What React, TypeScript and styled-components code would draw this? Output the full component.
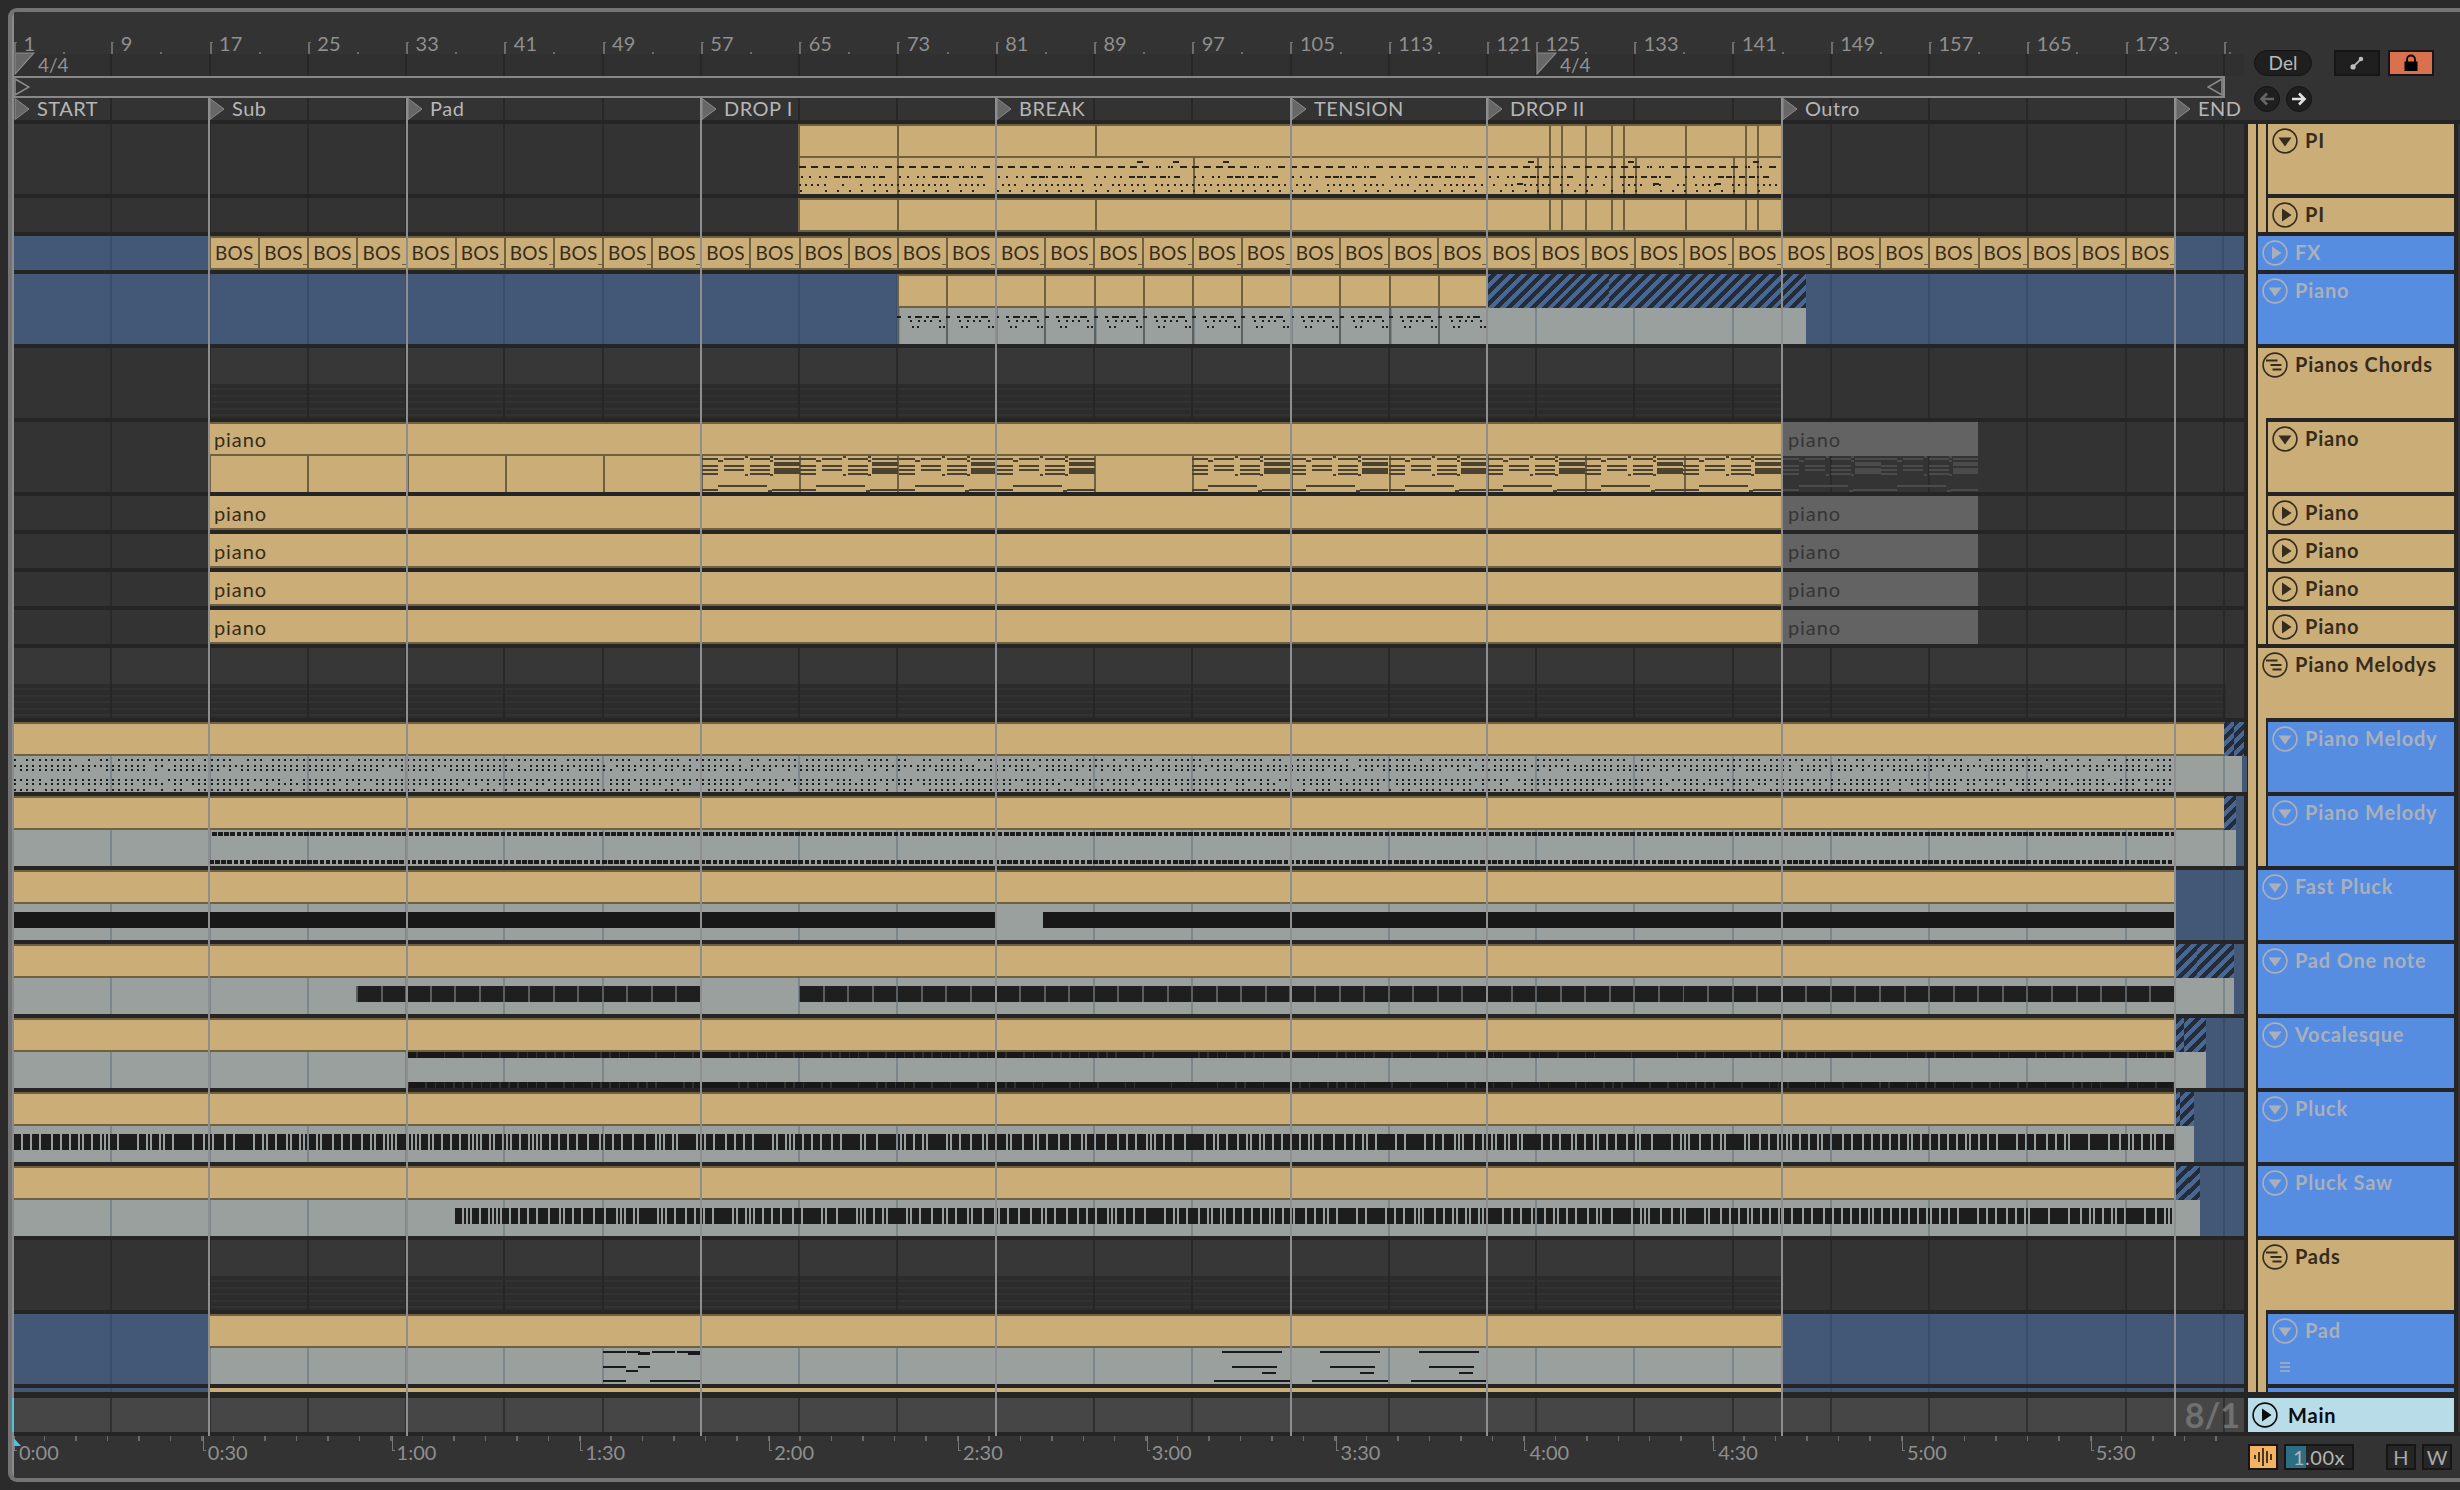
import React from 'react';
import styled, { createGlobalStyle, css } from 'styled-components';

const ORIGIN = 14; // x of the first lane pixel
const END_X = 2244; // right edge of the lanes
const STEP8 = 98.27; // width of 8 bars
const STEP4 = STEP8 / 2;

const TAN = '#cbad78';
const TAN_LINE = '#6f6040';
const BLUE = '#578de0';
const FONT = `'Lato', 'Noto Sans', sans-serif`;

// the grid jumps half a step at bar 125, where the second time signature sits
const gridXs: number[] = [];
for (let x = 13 + STEP8; x < 1500; x += STEP8) gridXs.push(x);
for (let x = 1536; x < END_X; x += STEP8) gridXs.push(x);

const gridImage = (color: string) => {
  const stops = gridXs.flatMap((x) => {
    const a = (x - ORIGIN - 1).toFixed(2);
    const b = (x - ORIGIN + 1).toFixed(2);
    return [`transparent ${a}px`, `${color} ${a}px`, `${color} ${b}px`, `transparent ${b}px`];
  });
  return `linear-gradient(90deg, transparent 0, ${stops.join(', ')})`;
};

const withGrid = (bg: string, line: string) => css`
  background-color: ${bg};
  background-image: ${gridImage(line)};
  background-size: 2300px 100%;
  background-repeat: no-repeat;
`;

const GlobalStyle = createGlobalStyle`
  html, body {
    margin: 0;
    width: 2460px;
    height: 1490px;
    overflow: hidden;
    background: #2b2b2b;
    font-family: ${FONT};
  }
`;

const Frame = styled.div`
  box-sizing: border-box;
  display: flex;
  gap: 4px;
  width: 2452px;
  height: 1474px;
  margin: 8px 0 0 8px;
  border: 4px solid #747474;
  border-right: none;
  border-radius: 9px 0 0 9px;
  background: #252525;
  overflow: hidden;
`;

/* ---------- arrangement column ---------- */

const Arrangement = styled.div`
  position: relative;
  box-sizing: border-box;
  display: flex;
  flex-direction: column;
  flex: 0 0 2232px;
  width: 2232px;
  min-width: 0;
  border-left: 2px solid #8b8b8b;
`;

const TimelineHead = styled.div`
  display: flex;
  flex-direction: column;
  flex: 0 0 108px;
  background: #333;
`;

const BarRuler = styled.div`
  display: flex;
  height: 42px;
`;

const BarCell = styled.div`
  position: relative;
  box-sizing: border-box;
  flex: none;
  padding: 21px 0 0 9.5px;
  font-size: 20px;
  line-height: 20px;
  color: #8f8f8f;
  &::before {
    content: '';
    position: absolute;
    left: 0;
    bottom: 0;
    width: 3px;
    height: 12px;
    box-sizing: border-box;
    border-left: 2px solid #6d6d6d;
    border-top: 1px solid #6d6d6d;
  }
  &::after {
    content: '';
    position: absolute;
    left: 50%;
    bottom: 0;
    width: 2px;
    height: 2px;
    background: #6d6d6d;
  }
`;

const SignatureLane = styled.div`
  display: flex;
  height: 22px;
  ${withGrid('#303030', '#272727')}
`;

const SignatureCell = styled.div`
  flex: none;
  display: flex;
  align-items: flex-start;
  gap: 3px;
  font-size: 19px;
  line-height: 22px;
  color: #929292;
  svg {
    margin-top: -2px;
  }
`;

const LoopLane = styled.div`
  box-sizing: border-box;
  display: flex;
  justify-content: space-between;
  align-items: center;
  width: 2211px;
  height: 22px;
  border: 2px solid #888;
  border-left: none;
`;

const LocatorLane = styled.div`
  display: flex;
  height: 22px;
  ${withGrid('#333', '#272727')}
`;

const LocatorCell = styled.div`
  flex: none;
  display: flex;
  align-items: center;
  gap: 7px;
  font-size: 20px;
  line-height: 20px;
  letter-spacing: 0.5px;
  white-space: nowrap;
  color: #b6b6b6;
`;

const LocatorName = styled.span`
  margin-top: -2px;
`;

const Lanes = styled.div`
  display: flex;
  flex-direction: column;
  gap: 4px;
  padding-top: 4px;
`;

const Lane = styled.div`
  display: flex;
  flex-direction: column;
`;

const StripBox = styled.div<{ $h: number }>`
  position: relative;
  display: flex;
  height: ${(p) => p.$h}px;
`;

const NoteLayer = styled.svg`
  position: absolute;
  left: 0;
  top: 0;
`;

type Kind =
  | 'empty'
  | 'blue'
  | 'gray'
  | 'head'
  | 'foot'
  | 'tanBody'
  | 'dim'
  | 'dimBody'
  | 'hatch'
  | 'groupTop'
  | 'groupStripes';

const kindStyles: Record<Kind, ReturnType<typeof css>> = {
  empty: withGrid('#333', '#292929'),
  blue: withGrid('#425876', '#3a4e6c'),
  gray: withGrid('#9aa09e', '#7c878c'),
  head: css`
    background: ${TAN};
    box-shadow: inset 0 2px ${TAN_LINE}, inset 0 -2px ${TAN_LINE};
  `,
  foot: css`
    background: ${TAN};
    box-shadow: inset 0 -2px ${TAN_LINE};
  `,
  tanBody: css`
    background: ${TAN};
  `,
  dim: css`
    background: #636363;
  `,
  dimBody: withGrid('#343434', '#2a2a2a'),
  hatch: css`
    background-image: repeating-linear-gradient(135deg, #222c3c 0 4.2px, #4a688f 4.2px 8.4px);
  `,
  groupTop: withGrid('#373737', '#292929'),
  groupStripes: css`
    background-image: ${gridImage('#262626')},
      repeating-linear-gradient(180deg, #2c2c2c 0 4.5px, #323232 4.5px 6.5px);
    background-size: 2300px 100%;
    background-repeat: no-repeat;
  `,
};

const Seg = styled.div<{ $kind: Kind; $divider?: boolean; $notch?: boolean }>`
  position: relative;
  box-sizing: border-box;
  flex: none;
  overflow: hidden;
  padding-left: 5px;
  font-size: 19px;
  line-height: 34px;
  letter-spacing: ${(p) => (p.$notch ? 0.3 : 0.9)}px;
  white-space: nowrap;
  color: #352c1c;
  ${(p) => kindStyles[p.$kind]}
  ${(p) => p.$kind === 'dim' && 'color: #353535;'}
  ${(p) => !p.$notch && 'font-size: 20px;'}
  ${(p) =>
    p.$divider &&
    css`
      border-left: 2px solid ${p.$kind === 'gray' ? '#5c6162' : TAN_LINE};
      padding-left: 4px;
    `}
  ${(p) =>
    p.$notch &&
    css`
      &::after {
        content: '';
        position: absolute;
        right: 0;
        bottom: 5px;
        width: 4px;
        height: 1.5px;
        background: ${TAN_LINE};
      }
    `}
`;

const SectionLine = styled.div`
  position: absolute;
  top: 86px;
  bottom: 42px;
  width: 2px;
  background: #8e8e8e;
  z-index: 2;
`;

const MainLane = styled.div`
  position: relative;
  flex: 0 0 34px;
  margin-top: 6px;
  ${withGrid('#464646', '#303030')}
`;

const Zoom = styled.div`
  position: absolute;
  right: 4px;
  top: 0;
  font-size: 34px;
  line-height: 34px;
  font-weight: 700;
  color: #707070;
`;

const PlayMark = styled.div`
  position: absolute;
  left: -2px;
  top: 0;
  bottom: 0;
  width: 2px;
  background: #4fc3dc;
`;

const TimeRuler = styled.div`
  position: relative;
  display: flex;
  flex: 0 0 42px;
  margin-top: 4px;
  overflow: hidden;
  background-color: #333;
  background-image: repeating-linear-gradient(90deg, transparent 0 30px, #6a6a6a 30px 31.47px);
  background-size: 100% 5px;
  background-repeat: no-repeat;
`;

const TimeCell = styled.div`
  position: relative;
  box-sizing: border-box;
  flex: 0 0 188.8px;
  padding: 6px 0 0 5px;
  font-size: 20px;
  line-height: 20px;
  color: #8f8f8f;
  &::before {
    content: '';
    position: absolute;
    left: 0;
    top: 0;
    width: 3px;
    height: 15px;
    box-sizing: border-box;
    border-left: 1.5px solid #777;
    border-bottom: 1px solid #777;
  }
`;

const PlayCorner = styled.svg`
  position: absolute;
  left: -1px;
  top: 1px;
`;

/* ---------- track headers ---------- */

const Sidebar = styled.div`
  display: flex;
  flex-direction: column;
  flex: 0 0 212px;
  min-width: 0;
`;

const Controls = styled.div`
  box-sizing: border-box;
  flex: 0 0 108px;
  display: flex;
  flex-direction: column;
  gap: 10px;
  margin-left: -4px;
  padding: 38px 0 0 10px;
  background: #333;
`;

const ControlRow = styled.div`
  display: flex;
`;

const Pill = styled.div`
  box-sizing: border-box;
  width: 58px;
  height: 26px;
  margin-right: 22px;
  border: 1.5px solid #141414;
  border-radius: 13px;
  background: #1f1f1f;
  font-size: 19px;
  line-height: 23px;
  text-align: center;
  color: #b9b9b9;
`;

const SquareButton = styled.div<{ $bg: string; $w?: number }>`
  box-sizing: border-box;
  display: flex;
  align-items: center;
  justify-content: center;
  width: ${(p) => p.$w ?? 46}px;
  height: 26px;
  margin-right: 8px;
  border: 2px solid #161616;
  background: ${(p) => p.$bg};
  font-size: 20px;
  color: #a9a9a9;
`;

const ArrowButton = styled.div`
  box-sizing: border-box;
  display: flex;
  align-items: center;
  justify-content: center;
  width: 26px;
  height: 26px;
  margin-right: 6px;
  border: 1.5px solid #141414;
  border-radius: 50%;
  background: #1f1f1f;
`;

const SideBody = styled.div`
  display: flex;
  margin-top: 4px;
`;

const SideColumn = styled.div`
  display: flex;
  flex-direction: column;
  flex: 0 0 206px;
  min-width: 0;
`;

const Rail = styled.div`
  flex: 0 0 2px;
  margin-left: 4px;
  background: #333;
`;

const Tree = styled.div`
  display: flex;
  gap: 2px;
`;

const TanStrip = styled.div`
  flex: 0 0 8px;
  background: ${TAN};
`;

const TreeList = styled.div<{ $padTop?: boolean }>`
  display: flex;
  flex-direction: column;
  flex: 1;
  min-width: 0;
  gap: 4px;
  padding-top: ${(p) => (p.$padTop ? 4 : 0)}px;
`;

const TrackHead = styled.div<{ $h: number; $blue?: boolean }>`
  position: relative;
  box-sizing: border-box;
  display: flex;
  align-items: flex-start;
  gap: 7px;
  height: ${(p) => p.$h}px;
  padding: 4px 0 0 4px;
  overflow: hidden;
  background: ${(p) => (p.$blue ? BLUE : TAN)};
  color: ${(p) => (p.$blue ? '#aab0bb' : '#352c1c')};
  font-size: 20px;
  font-weight: 700;
  line-height: 25px;
  letter-spacing: 0.8px;
  white-space: nowrap;
`;

const MainTrack = styled.div`
  box-sizing: border-box;
  display: flex;
  align-items: center;
  gap: 10px;
  height: 34px;
  margin-top: 6px;
  padding-left: 4px;
  background: #b8dce8;
  color: #0c0c0c;
  font-size: 20px;
  font-weight: 700;
  letter-spacing: 0.8px;
`;

const ListIcon = styled.svg`
  position: absolute;
  left: 12px;
  top: 48px;
`;

const BottomBar = styled.div`
  box-sizing: border-box;
  flex: 0 0 42px;
  display: flex;
  margin: 4px 0 0 -4px;
  padding: 8px 0 0 4px;
  background: #333;
`;

const WaveButton = styled.div`
  box-sizing: border-box;
  display: flex;
  align-items: center;
  justify-content: center;
  width: 30px;
  height: 26px;
  margin-right: 6px;
  border: 2px solid #161616;
  background: #f5b261;
`;

const TempoField = styled.div`
  position: relative;
  box-sizing: border-box;
  width: 70px;
  height: 26px;
  margin-right: 32px;
  border: 2px solid #161616;
  background: #262626;
  font-size: 20px;
  line-height: 22px;
  letter-spacing: 0.5px;
  padding-left: 7px;
  color: #b4b4b4;
`;

const TempoFill = styled.div`
  position: absolute;
  left: 0;
  top: 0;
  bottom: 0;
  width: 20px;
  background: #2d6e84;
`;

const TempoText = styled.span`
  position: relative;
`;

const FlagButton = styled(SquareButton)`
  margin-right: 6px;
  font-weight: 400;
`;

/* ---------- icons ---------- */

const CircleIcon: React.FC<{ kind: 'down' | 'right' | 'group'; color: string }> = ({ kind, color }) => (
  <svg width={26} height={26} viewBox="0 0 26 26" style={{ flex: 'none' }}>
    <circle cx={13} cy={13} r={11.9} fill="none" stroke={color} strokeWidth={1.6} />
    {kind === 'down' && <polygon points="6.5,9.5 19.5,9.5 13,18.5" fill={color} />}
    {kind === 'right' && <polygon points="10,6.5 19.5,13 10,19.5" fill={color} />}
    {kind === 'group' && (
      <path d="M4 8.5h11.5M8.5 13h11M10.5 17.5h9" stroke={color} strokeWidth={1.8} fill="none" />
    )}
  </svg>
);

const LocatorFlag = () => (
  <svg width={16} height={22} viewBox="0 0 16 22" style={{ flex: 'none' }}>
    <polygon points="1,0.5 15,11 1,21.5" fill="#676767" stroke="#8c8c8c" strokeWidth={1} />
  </svg>
);

const SignatureFlag = () => (
  <svg width={21} height={23} viewBox="0 0 21 23" style={{ flex: 'none' }}>
    <polygon points="1,1 20,1 1,22" fill="#686868" stroke="#8a8a8a" strokeWidth={1.2} />
  </svg>
);

const LoopFlag: React.FC<{ flip?: boolean }> = ({ flip }) => (
  <svg width={16} height={18} viewBox="0 0 16 18" style={{ flex: 'none' }}>
    <polygon
      points={flip ? '15,1 1,9 15,17' : '1,1 15,9 1,17'}
      fill="none"
      stroke="#8a8a8a"
      strokeWidth={1.6}
    />
  </svg>
);

/* ---------- note drawings ---------- */

const noise = (i: number) => {
  const s = Math.sin(i * 12.9898) * 43758.5453;
  return s - Math.floor(s);
};

const rect = (x: number, y: number, w: number, h: number) =>
  `M${(x - ORIGIN).toFixed(1)} ${y}h${w.toFixed(1)}v${h}h${(-w).toFixed(1)}z`;

type TileRect = [number, number, number, number];

const tile = (from: number, to: number, period: number, rects: TileRect[]) => {
  let d = '';
  for (let k = 0; from + k * period < to; k++) {
    for (const [rx, ry, rw, rh] of rects) {
      const x = from + k * period + rx;
      if (x < to) d += rect(x, ry, Math.min(rw, to - x), rh);
    }
  }
  return d;
};

const dots = (from: number, to: number, y: number, step: number, w: number, h: number, seed: number, keep = 0.85) => {
  let d = '';
  let i = 0;
  for (let x = from; x < to; x += step, i++) {
    if (noise(i + seed) < keep) d += rect(x, y, Math.min(w, to - x), h);
  }
  return d;
};

const barcode = (from: number, to: number, y: number, h: number, seed: number) => {
  let d = '';
  let x = from;
  let i = 0;
  while (x < to) {
    const n = noise(i + seed);
    const w = n < 0.3 ? 2 : n < 0.75 ? 7 : n < 0.93 ? 9.5 : 18;
    d += rect(x, y, Math.min(w, to - x), h);
    x += w + 2;
    i++;
  }
  return d;
};

const leadCycle = (from: number, to: number) => {
  const rects: TileRect[] = [
    [0, 8, 7, 2], [12, 8, 7, 2], [24, 8, 7, 2], [36, 8, 7, 2], [48, 8, 7, 2],
    [62, 8, 2, 2], [65, 8, 2, 2], [74, 8, 2, 2], [77, 8, 2, 2], [86, 8, 7, 2],
    [2, 18, 2, 2], [10, 18, 2, 2], [20, 18, 2, 2], [26, 18, 2, 2], [35, 18, 6, 2], [43, 18, 6, 2],
    [50, 18, 2, 2], [56, 18, 6, 2], [66, 18, 6, 2], [74, 18, 2, 2], [80, 18, 6, 2],
  ];
  return tile(from, to, STEP8, rects);
};

const lead =
  leadCycle(799, 1783) +
  dots(799, 1783, 26, 6.14, 2, 2, 5, 0.8) +
  dots(800, 1783, 32, 12.28, 2, 2, 40, 0.85) +
  [1137, 1173, 1223, 1528, 1628, 1753].map((x) => rect(x, 3, 6, 2)).join('') +
  [1517, 1653, 1715].map((x) => rect(x, 25, 6, 2)).join('');

const chordCycle: TileRect[] = [
  [0, 2, 16, 2], [22, 2, 20, 2], [48, 2, 20, 2], [72, 2, 26, 2],
  [16, 4, 5, 2], [43, 0, 3, 2], [68, 0, 3, 2], [68, 4, 3, 2],
  [72, 6, 26, 4],
  [0, 9, 16, 2], [22, 9, 20, 2], [48, 9, 20, 2],
  [72, 12, 26, 6],
  [0, 13, 16, 2], [22, 13, 20, 2], [48, 13, 20, 2],
  [0, 17, 16, 2], [43, 18, 3, 2], [48, 17, 20, 2], [68, 18, 3, 2],
  [16, 29, 49, 2],
  [0, 33, 16, 2], [70, 33, 28, 2], [66, 34, 4, 2],
];

const padCycle: TileRect[] = [
  [0, 3, 23, 2], [24, 3, 13, 2], [49, 3, 23, 2], [74, 3, 24, 2],
  [35, 4, 12, 3], [85, 4, 12, 3],
  [0, 18, 23, 2], [35, 18, 12, 2], [23, 22, 12, 2],
  [0, 32, 23, 2], [47, 32, 50, 2],
];

const padLate: TileRect[] = [
  [30, 3, 60, 2],
  [40, 18, 45, 2], [70, 24, 14, 2],
  [22, 32, 76, 2],
];

const pad1Notes = tile(603, 701, STEP8, padCycle) + tile(1192, 1487, STEP8, padLate);

const NOTE = '#1b1d1d';

/* ---------- lanes ---------- */

interface SegSpec {
  to: number;
  kind: Kind;
  label?: string;
  divider?: boolean;
  notch?: boolean;
}

interface NoteSpec {
  d: string;
  color: string;
}

interface StripSpec {
  h: number;
  segs: SegSpec[];
  notes?: NoteSpec[];
}

// turns a list of boundaries into clips that each open with a divider line
const clipRun = (bounds: number[], kind: Kind): SegSpec[] =>
  bounds.slice(1).map((to) => ({ to, kind, divider: true }));

const gap = (to: number): SegSpec => ({ to, kind: 'empty' });
const blueTo = (to: number): SegSpec => ({ to, kind: 'blue' });

const leadHead = [798, 897, 1095, 1549, 1561, 1585, 1611, 1623, 1685, 1745, 1757, 1783];
const leadBody = [798, 897, 1193, 1537, 1549, 1561, 1585, 1611, 1623, 1635, 1685, 1733, 1745, 1757, 1783];

const bosBounds = Array.from({ length: 41 }, (_, i) => 209 + i * STEP4);
const pianoBounds = Array.from({ length: 13 }, (_, i) => 897 + i * 49.17);
const chordBounds = [209, 307, 407, 505, 603, 701, 799, 897, 995, 1094, 1192, 1291, 1389, 1487, 1585, 1684, 1783];

const groupLane = (from: number, to: number): StripSpec[] => [
  { h: 36, segs: [...(from > ORIGIN ? [gap(from)] : []), { to, kind: 'groupTop' }, gap(END_X)] },
  { h: 34, segs: [...(from > ORIGIN ? [gap(from)] : []), { to, kind: 'groupStripes' }, gap(END_X)] },
];

const pianoRow = (): StripSpec[] => [
  {
    h: 34,
    segs: [gap(209), { to: 1783, kind: 'foot', label: 'piano' }, { to: 1978, kind: 'dim', label: 'piano' }, gap(END_X)],
  },
];

const melodyLane = (tanEnd: number, hatchEnd: number, grayEnd: number, notes: NoteSpec[]): StripSpec[] => [
  {
    h: 34,
    segs: [
      { to: tanEnd, kind: 'head' },
      ...(hatchEnd > tanEnd ? [{ to: hatchEnd, kind: 'hatch' as Kind }] : []),
      ...(hatchEnd < END_X ? [blueTo(END_X)] : []),
    ],
  },
  { h: 36, segs: [{ to: grayEnd, kind: 'gray' }, blueTo(END_X)], notes },
];

const denseRows = [2.5, 8.5, 12.5, 22.5, 26.5, 32.5]
  .map((y, i) => dots(ORIGIN, 2175, y, 6.14, 2, 2, i * 97, i === 1 || i === 3 ? 0.95 : 0.82))
  .join('');

const stepped =
  dots(212, 2175, 2, 6.14, 4.5, 4, 300, 1) + dots(209, 2175, 30, 6.14, 4.5, 4, 300, 1);

const blocks = (from: number, to: number) => tile(from, to, STEP8 / 4, [[0, 8, 22.6, 16]]);

const vocal = [0, 30]
  .map((y) => rect(407, y, 2175 - 407, 6))
  .join('');

const LANES: StripSpec[][] = [
  [
    { h: 34, segs: [gap(798), ...clipRun(leadHead, 'head'), gap(END_X)] },
    {
      h: 36,
      segs: [gap(798), ...clipRun(leadBody, 'tanBody'), gap(END_X)],
      notes: [{ d: lead, color: '#2a2418' }],
    },
  ],
  [{ h: 34, segs: [gap(798), ...clipRun(leadHead, 'head'), gap(END_X)] }],
  [
    {
      h: 34,
      segs: [
        blueTo(209),
        ...bosBounds.slice(1).map((to): SegSpec => ({ to, kind: 'head', divider: true, notch: true, label: 'BOS' })),
        blueTo(END_X),
      ],
    },
  ],
  [
    { h: 34, segs: [blueTo(897), ...clipRun(pianoBounds, 'head'), { to: 1806, kind: 'hatch' }, blueTo(END_X)] },
    {
      h: 36,
      segs: [blueTo(897), ...clipRun(pianoBounds, 'gray'), { to: 1806, kind: 'gray' }, blueTo(END_X)],
      notes: [
        {
          d: tile(897, 1487, 49.17, [
            [0, 8, 4, 2], [11, 8, 3, 2], [18, 8, 7, 2], [29, 8, 3, 2], [35, 8, 7, 2],
            [13, 12, 2, 2], [21, 12, 2, 2], [27, 12, 2, 2], [33, 12, 2, 2], [42, 12, 2, 2],
            [15, 18, 2, 2], [20, 18, 2, 2], [42, 18, 2, 2], [46, 18, 2, 2],
          ]),
          color: NOTE,
        },
      ],
    },
  ],
  groupLane(209, 1783),
  [
    {
      h: 34,
      segs: [gap(209), { to: 1783, kind: 'head', label: 'piano' }, { to: 1978, kind: 'dim', label: 'piano' }, gap(END_X)],
    },
    {
      h: 36,
      segs: [gap(209), ...clipRun(chordBounds, 'tanBody'), { to: 1978, kind: 'dimBody' }, gap(END_X)],
      notes: [
        { d: tile(702, 1095, STEP8, chordCycle) + tile(1192, 1783, STEP8, chordCycle), color: '#4c4230' },
        { d: tile(1783, 1978, STEP8, chordCycle), color: '#4b4b4b' },
      ],
    },
  ],
  pianoRow(),
  pianoRow(),
  pianoRow(),
  pianoRow(),
  groupLane(ORIGIN, 2226),
  melodyLane(2224, END_X, 2242, [{ d: denseRows, color: NOTE }]),
  melodyLane(2224, 2236, 2236, [{ d: stepped, color: NOTE }]),
  melodyLane(2175, 2175, 2175, [
    { d: rect(ORIGIN, 8, 995 - ORIGIN, 16) + rect(1043, 8, 2175 - 1043, 16), color: '#181818' },
  ]),
  melodyLane(2175, 2234, 2234, [
    { d: rect(356, 8, 701 - 356, 16) + rect(799, 8, 2175 - 799, 16), color: '#5a5e5e' },
    { d: blocks(358, 701) + blocks(800, 2175), color: '#1f1f1f' },
  ]),
  melodyLane(2175, 2206, 2206, [
    { d: vocal, color: '#181818' },
    { d: dots(407, 2175, 0, 9.2, 1.5, 6, 11, 0.6) + dots(407, 2175, 30, 9.2, 1.5, 6, 61, 0.6), color: '#303030' },
  ]),
  melodyLane(2175, 2194, 2194, [{ d: barcode(ORIGIN, 2175, 8, 16, 17), color: '#1d1d1d' }]),
  melodyLane(2175, 2200, 2200, [{ d: barcode(455, 2175, 8, 16, 77), color: '#1d1d1d' }]),
  groupLane(209, 1783),
  [
    { h: 34, segs: [blueTo(209), { to: 1783, kind: 'head' }, blueTo(END_X)] },
    {
      h: 36,
      segs: [blueTo(209), { to: 1783, kind: 'gray' }, blueTo(END_X)],
      notes: [{ d: pad1Notes, color: '#1a1a1a' }],
    },
  ],
  [{ h: 4, segs: [blueTo(209), { to: 1783, kind: 'tanBody' }, blueTo(END_X)] }],
];

const LaneStrip: React.FC<{ strip: StripSpec }> = ({ strip }) => {
  let from = ORIGIN;
  return (
    <StripBox $h={strip.h}>
      {strip.segs.map((seg, i) => {
        const x = from;
        from = seg.to;
        return (
          <Seg
            key={i}
            $kind={seg.kind}
            $divider={seg.divider}
            $notch={seg.notch}
            style={{ width: seg.to - x, backgroundPositionX: ORIGIN - x }}
          >
            {seg.label}
          </Seg>
        );
      })}
      {strip.notes && (
        <NoteLayer width={END_X - ORIGIN} height={strip.h} shapeRendering="crispEdges">
          {strip.notes.map((n, i) => (
            <path key={i} d={n.d} fill={n.color} />
          ))}
        </NoteLayer>
      )}
    </StripBox>
  );
};

/* ---------- timeline data ---------- */

const barMarks: { label?: number; x: number }[] = [];
for (let i = 0; i <= 15; i++) barMarks.push({ label: 1 + i * 8, x: i === 0 ? ORIGIN : 13 + i * STEP8 });
for (let i = 0; i <= 6; i++) barMarks.push({ label: 125 + i * 8, x: 1536 + i * STEP8 });
barMarks.push({ x: 1536 + 7 * STEP8 });

const locators = [
  { name: 'START', x: ORIGIN },
  { name: 'Sub', x: 209 },
  { name: 'Pad', x: 407 },
  { name: 'DROP I', x: 701 },
  { name: 'BREAK', x: 996 },
  { name: 'TENSION', x: 1291 },
  { name: 'DROP II', x: 1487 },
  { name: 'Outro', x: 1782 },
  { name: 'END', x: 2175 },
];

const times = ['0:00', '0:30', '1:00', '1:30', '2:00', '2:30', '3:00', '3:30', '4:00', '4:30', '5:00', '5:30'];

const DARK_TEXT = '#352c1c';
const DIM_TEXT = '#aab0bb';

const Head: React.FC<{ name: string; h: number; blue?: boolean; icon: 'down' | 'right' | 'group' }> = ({
  name,
  h,
  blue,
  icon,
}) => (
  <TrackHead $h={h} $blue={blue}>
    <CircleIcon kind={icon} color={blue ? DIM_TEXT : DARK_TEXT} />
    {name}
  </TrackHead>
);

const App: React.FC = () => (
  <>
    <GlobalStyle />
    <Frame>
      <Arrangement>
        <TimelineHead>
          <BarRuler>
            {barMarks.map((m, i) => (
              <BarCell key={i} style={{ width: (barMarks[i + 1]?.x ?? m.x + 2) - m.x }}>
                {m.label}
              </BarCell>
            ))}
          </BarRuler>
          <SignatureLane>
            <SignatureCell style={{ width: 1536 - ORIGIN }}>
              <SignatureFlag />
              4/4
            </SignatureCell>
            <SignatureCell>
              <SignatureFlag />
              4/4
            </SignatureCell>
          </SignatureLane>
          <LoopLane>
            <LoopFlag />
            <LoopFlag flip />
          </LoopLane>
          <LocatorLane>
            {locators.map((l, i) => (
              <LocatorCell key={l.name} style={{ width: (locators[i + 1]?.x ?? END_X) - l.x }}>
                <LocatorFlag />
                <LocatorName>{l.name}</LocatorName>
              </LocatorCell>
            ))}
          </LocatorLane>
        </TimelineHead>

        <Lanes>
          {LANES.map((lane, i) => (
            <Lane key={i}>
              {lane.map((strip, j) => (
                <LaneStrip key={j} strip={strip} />
              ))}
            </Lane>
          ))}
        </Lanes>

        <MainLane>
          <PlayMark />
          <Zoom>8/1</Zoom>
        </MainLane>

        <TimeRuler>
          {times.map((t) => (
            <TimeCell key={t}>{t}</TimeCell>
          ))}
          <PlayCorner width={9} height={10} viewBox="0 0 9 10">
            <polygon points="0,0 8,9 0,9" fill="#4fc3dc" />
          </PlayCorner>
        </TimeRuler>

        {locators.slice(1).map((l) => (
          <SectionLine key={l.name} style={{ left: l.x - ORIGIN - 1 }} />
        ))}
      </Arrangement>

      <Sidebar>
        <Controls>
          <ControlRow>
            <Pill>Del</Pill>
            <SquareButton $bg="#1f1f1f">
              <svg width={14} height={14} viewBox="0 0 16 16">
                <path d="M3.5 12.5L12.5 3.5" stroke="#bdbdbd" strokeWidth={2} />
                <circle cx={3.5} cy={12.5} r={3} fill="#bdbdbd" />
                <circle cx={12.5} cy={3.5} r={2.6} fill="#bdbdbd" />
              </svg>
            </SquareButton>
            <SquareButton $bg="#d9714f">
              <svg width={16} height={18} viewBox="0 0 16 18">
                <path d="M4 8V5.5a4 4 0 0 1 8 0V8" fill="none" stroke="#000" strokeWidth={1.8} />
                <rect x={1.5} y={7.5} width={13} height={9.5} fill="#000" />
              </svg>
            </SquareButton>
          </ControlRow>
          <ControlRow>
            <ArrowButton>
              <svg width={16} height={14} viewBox="0 0 16 14">
                <path d="M15 7H4M8 1.5L2.5 7L8 12.5" fill="none" stroke="#666" strokeWidth={2.6} />
              </svg>
            </ArrowButton>
            <ArrowButton>
              <svg width={16} height={14} viewBox="0 0 16 14">
                <path d="M1 7H12M8 1.5L13.5 7L8 12.5" fill="none" stroke="#e2e2e2" strokeWidth={2.6} />
              </svg>
            </ArrowButton>
          </ControlRow>
        </Controls>

        <SideBody>
          <SideColumn>
            <Tree>
              <TanStrip />
              <TreeList>
                <Tree>
                  <TanStrip />
                  <TreeList>
                    <Head name="PI" h={70} icon="down" />
                    <Head name="PI" h={34} icon="right" />
                  </TreeList>
                </Tree>
                <Head name="FX" h={34} blue icon="right" />
                <Head name="Piano" h={70} blue icon="down" />
                <div>
                  <Head name="Pianos Chords" h={70} icon="group" />
                  <Tree>
                    <TanStrip />
                    <TreeList $padTop>
                      <Head name="Piano" h={70} icon="down" />
                      <Head name="Piano" h={34} icon="right" />
                      <Head name="Piano" h={34} icon="right" />
                      <Head name="Piano" h={34} icon="right" />
                      <Head name="Piano" h={34} icon="right" />
                    </TreeList>
                  </Tree>
                </div>
                <div>
                  <Head name="Piano Melodys" h={70} icon="group" />
                  <Tree>
                    <TanStrip />
                    <TreeList $padTop>
                      <Head name="Piano Melody" h={70} blue icon="down" />
                      <Head name="Piano Melody" h={70} blue icon="down" />
                    </TreeList>
                  </Tree>
                </div>
                <Head name="Fast Pluck" h={70} blue icon="down" />
                <Head name="Pad One note" h={70} blue icon="down" />
                <Head name="Vocalesque" h={70} blue icon="down" />
                <Head name="Pluck" h={70} blue icon="down" />
                <Head name="Pluck Saw" h={70} blue icon="down" />
                <div>
                  <Head name="Pads" h={70} icon="group" />
                  <Tree>
                    <TanStrip />
                    <TreeList $padTop>
                      <TrackHead $h={70} $blue>
                        <CircleIcon kind="down" color={DIM_TEXT} />
                        Pad
                        <ListIcon width={10} height={10} viewBox="0 0 10 10">
                          <path d="M0 1h10M0 5h10M0 9h10" stroke={DIM_TEXT} strokeWidth={1.6} />
                        </ListIcon>
                      </TrackHead>
                      <TrackHead $h={4} $blue />
                    </TreeList>
                  </Tree>
                </div>
              </TreeList>
            </Tree>
            <MainTrack>
              <CircleIcon kind="right" color="#0c0c0c" />
              Main
            </MainTrack>
          </SideColumn>
          <Rail />
        </SideBody>

        <BottomBar>
          <WaveButton>
            <svg width={20} height={18} viewBox="0 0 20 18">
              <path d="M2 7v4M6 4v10M10 0v18M14 3v12M18 6v6" stroke="#1a1a1a" strokeWidth={1.6} />
            </svg>
          </WaveButton>
          <TempoField>
            <TempoFill />
            <TempoText>1.00x</TempoText>
          </TempoField>
          <FlagButton $bg="#262626" $w={30}>H</FlagButton>
          <FlagButton $bg="#262626" $w={30}>W</FlagButton>
        </BottomBar>
      </Sidebar>
    </Frame>
  </>
);

export default App;
